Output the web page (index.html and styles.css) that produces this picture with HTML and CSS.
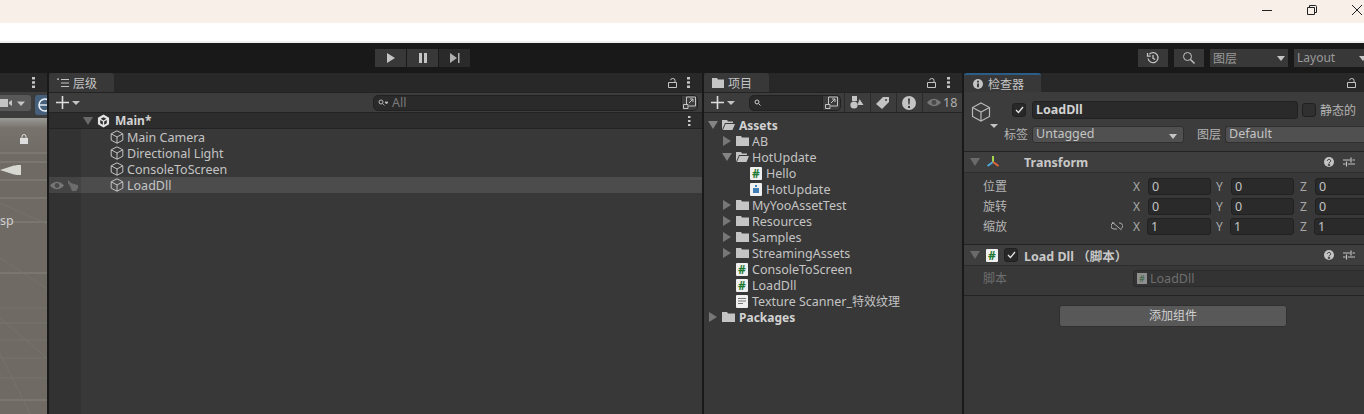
FILE: index.html
```html
<!DOCTYPE html>
<html lang="zh">
<head>
    <meta charset="UTF-8">
    <title>Unity</title>
    <link rel="stylesheet" href="styles.css">
</head>
<body>
    <div class="titlebar">
        <svg class="win-icon" width="12" height="12" viewBox="0 0 12 12"><path d="M1 6.500h10" stroke="#222" fill="none"/></svg>
        <svg class="win-icon" width="12" height="12" viewBox="0 0 12 12"><path d="M1.500 3.500h7v7h-7zM3.500 3.500v-2h6a1 1 0 0 1 1 1v6h-2" stroke="#222" fill="none"/></svg>
        <svg class="win-icon" width="12" height="12" viewBox="0 0 12 12"><path d="M1 1l10 10M11 1L1 11" stroke="#222" fill="none"/></svg>
    </div>
    <div class="menubar"></div>

    <div class="toolbar">
        <div class="play-group">
            <div class="play-btn first"><svg width="10" height="10" viewBox="0 0 10 10"><path d="M1 0l8 5-8 5z" fill="#c4c4c4"/></svg></div>
            <div class="play-btn"><svg width="10" height="10" viewBox="0 0 10 10"><path d="M1 0h3v10H1zM6 0h3v10H6z" fill="#c4c4c4"/></svg></div>
            <div class="play-btn last"><svg width="10" height="10" viewBox="0 0 10 10"><path d="M0 0l7 5-7 5zM8 0h1.500v10H8z" fill="#b0b0b0"/></svg></div>
        </div>
        <div class="tool-right">
            <div class="tool-btn"><svg width="14" height="14" viewBox="0 0 14 14"><path d="M3.400 3.200a5 5 0 1 1-1.300 4.300M1.500 2v3.200h3.200M7 4v3.300l2.200 1.200" stroke="#c4c4c4" stroke-width="1.300" fill="none"/></svg></div>
            <div class="tool-btn"><svg width="14" height="14" viewBox="0 0 14 14"><circle cx="5.500" cy="5.500" r="4" stroke="#c4c4c4" fill="none"/><path d="M8.500 8.500l4 4" stroke="#c4c4c4" stroke-width="1.400"/></svg></div>
            <div class="tool-drop layers">图层<span class="caret"></span></div>
            <div class="tool-drop layout">Layout<span class="caret"></span></div>
        </div>
    </div>

    <div class="panels">
        <div class="panel scene">
            <div class="tabbar"><span class="spacer"></span><svg class="dots" width="3" height="11" viewBox="0 0 3 11"><path d="M0 0h3v2.400H0zM0 4.300h3v2.400H0zM0 8.600h3V11H0z" fill="#c4c4c4"/></svg></div>
            <div class="scene-tools">
                <div class="cam-btn"><svg width="26" height="10" viewBox="0 0 26 10"><path d="M0 1h8v8H0zM9 4l3-2v6l-3-2z" fill="#c4c4c4"/><path d="M17 3.500h8l-4 4.500z" fill="#c4c4c4"/></svg></div>
                <div class="gizmo-btn"><svg width="12" height="14" viewBox="0 0 12 14"><circle cx="10" cy="7" r="6" stroke="#eaf2fa" stroke-width="1.600" fill="none"/><path d="M4 7h8" stroke="#eaf2fa" stroke-width="1.400"/></svg></div>
            </div>
            <div class="scene-view">
                <svg class="scene-grid" width="47" height="296" viewBox="0 0 47 296">
                    <path d="M0 35h47M0 44h47M0 62h47M0 80h47M0 104h47M0 155h47M0 282h47" stroke="#87827c" fill="none"/>
                    <path d="M0 85l47 21M0 140l47 31M0 190h47M0 205h47M0 222h47M0 240h47M0 260h47M0 200l47 40M0 235l30 61" stroke="#77726c" fill="none"/>
                </svg>
                <svg class="scene-lock" width="8" height="10" viewBox="0 0 8 10"><path d="M2 4V2.500a2 2 0 0 1 4 0V4" stroke="#ddd" fill="none"/><path d="M0 4h8v6H0z" fill="#ddd"/></svg>
                <svg class="scene-cone" width="22" height="14" viewBox="0 0 22 14"><path d="M0 7L14 2.500q2 0 3-.5h4v10h-4q-1-.5-3-.5z" fill="#d8d8d2"/></svg>
                <span class="scene-label">sp</span>
            </div>
        </div>

        <div class="panel hierarchy">
            <div class="tabbar">
                <div class="tab"><svg class="tab-icon" width="12" height="10" viewBox="0 0 12 10"><path d="M0 1h2M4 1.500h8M4 5h8M4 8.500h8M1 1v1" stroke="#c4c4c4" fill="none"/></svg>层级</div>
                <span class="spacer"></span>
                <svg class="lock" width="9" height="10" viewBox="0 0 9 10"><path d="M.500 4.500h8v5h-8zM7 4.500V2.200a2.200 1.700 0 0 0-4.400 0" stroke="#c4c4c4" fill="none"/></svg>
                <svg class="dots" width="3" height="11" viewBox="0 0 3 11"><path d="M0 0h3v2.400H0zM0 4.300h3v2.400H0zM0 8.600h3V11H0z" fill="#c4c4c4"/></svg>
            </div>
            <div class="panel-tools">
                <svg class="plus" width="13" height="13" viewBox="0 0 13 13"><path d="M6.500 0v13M0 6.500h13" stroke="#ddd" stroke-width="1.600"/></svg>
                <span class="mini-caret"></span>
                <span class="spacer"></span>
                <div class="search wide">
                    <svg width="10" height="8" viewBox="0 0 10 8"><circle cx="3" cy="3" r="2" stroke="#bbb" fill="none"/><path d="M4.500 4.500L6.500 6.500M7 3h3l-1.500 2z" stroke="#bbb" stroke-width=".8" fill="#bbb"/></svg>
                    <span class="search-text">All</span>
                </div>
                <div class="search-end"><svg width="13" height="13" viewBox="0 0 13 13"><path d="M3.500 8V1h9v9H5.500M0.500 8.500h4.500v4h-4.500zM6 7l4-4M7 3h3v3" stroke="#c4c4c4" fill="none"/></svg></div>
            </div>
            <div class="scene-row"><span class="arrow-down muted"></span>
                <svg class="unity-icon" width="13" height="14" viewBox="0 0 14 14"><path d="M7 0l6 3.500v7L7 14l-6-3.500v-7zM7 3L4 4.700 7 6.500l3-1.800zM3.500 6v3.500L6.300 11V7.500zM10.500 6L7.700 7.500V11l2.800-1.500z" fill="#e4e4e4" fill-rule="evenodd"/></svg>
                <b>Main*</b><span class="spacer"></span>
                <svg class="dots small" width="3" height="10" viewBox="0 0 3 10"><path d="M0 0h2.500v2H0zM0 4h2.500v2H0zM0 8h2.500v2H0z" fill="#c4c4c4"/></svg>
            </div>
            <div class="hier-body">
                <div class="hier-gutter">
                    <div class="gutter-row"></div>
                    <div class="gutter-row"></div>
                    <div class="gutter-row"></div>
                    <div class="gutter-row selected">
                        <svg width="14" height="9" viewBox="0 0 14 9"><path d="M0 4.500Q7-3 14 4.500 7 12 0 4.500z" fill="#777"/><circle cx="7" cy="4.500" r="2.400" fill="#4a4a4a"/></svg>
                        <svg width="12" height="11" viewBox="0 0 12 11"><path d="M1 0l3 3 3 1 4 1v3l-2 3H5L3 6 1 3z" fill="#6c6c6c"/></svg>
                    </div>
                </div>
                <div class="hier-list">
                    <div class="hier-row"><svg class="cube" width="14" height="14" viewBox="0 0 14 14"><path d="M7 .8l5.800 3v6.400L7 13.200 1.200 10.200V3.800zM1.200 3.800L7 7l5.800-3.200M7 7v6.200" stroke="#c4c4c4" fill="none"/></svg>Main Camera</div>
                    <div class="hier-row"><svg class="cube" width="14" height="14" viewBox="0 0 14 14"><path d="M7 .8l5.800 3v6.400L7 13.200 1.200 10.200V3.800zM1.200 3.800L7 7l5.800-3.200M7 7v6.200" stroke="#c4c4c4" fill="none"/></svg>Directional Light</div>
                    <div class="hier-row"><svg class="cube" width="14" height="14" viewBox="0 0 14 14"><path d="M7 .8l5.800 3v6.400L7 13.200 1.200 10.200V3.800zM1.200 3.800L7 7l5.800-3.200M7 7v6.200" stroke="#c4c4c4" fill="none"/></svg>ConsoleToScreen</div>
                    <div class="hier-row selected"><svg class="cube" width="14" height="14" viewBox="0 0 14 14"><path d="M7 .8l5.800 3v6.400L7 13.200 1.200 10.200V3.800zM1.200 3.800L7 7l5.800-3.200M7 7v6.200" stroke="#c4c4c4" fill="none"/></svg>LoadDll</div>
                </div>
            </div>
        </div>

        <div class="panel project">
            <div class="tabbar">
                <div class="tab"><svg class="tab-icon" width="12" height="10" viewBox="0 0 12 10"><path d="M0 0h5l1 1.500h6V10H0z" fill="#c4c4c4"/></svg>项目</div>
                <span class="spacer"></span>
                <svg class="lock" width="9" height="10" viewBox="0 0 9 10"><path d="M.500 4.500h8v5h-8zM7 4.500V2.200a2.200 1.700 0 0 0-4.400 0" stroke="#c4c4c4" fill="none"/></svg>
                <svg class="dots" width="3" height="11" viewBox="0 0 3 11"><path d="M0 0h3v2.400H0zM0 4.300h3v2.400H0zM0 8.600h3V11H0z" fill="#c4c4c4"/></svg>
            </div>
            <div class="panel-tools project-tools">
                <svg class="plus" width="13" height="13" viewBox="0 0 13 13"><path d="M6.500 0v13M0 6.500h13" stroke="#ddd" stroke-width="1.600"/></svg>
                <span class="mini-caret"></span>
                <div class="search narrow"><svg width="7" height="7" viewBox="0 0 7 7"><circle cx="3" cy="3" r="2" stroke="#ccc" fill="none"/><path d="M4.500 4.500L6.500 6.500" stroke="#ccc"/></svg></div>
                <div class="search-end"><svg width="13" height="13" viewBox="0 0 13 13"><path d="M3.500 8V1h9v9H5.500M0.500 8.500h4.500v4h-4.500zM6 7l4-4M7 3h3v3" stroke="#c4c4c4" fill="none"/></svg></div>
                <div class="filter-btn"><svg width="14" height="13" viewBox="0 0 14 13"><circle cx="4" cy="9" r="3.600" fill="#c4c4c4"/><path d="M2 0h5v5H2z" fill="#c4c4c4"/><path d="M9.500 3l4 6h-6z" fill="#c4c4c4"/></svg></div>
                <div class="filter-btn"><svg width="13" height="12" viewBox="0 0 13 12"><path d="M0 7l7-7h6v5l-7 7z" fill="#c4c4c4"/><circle cx="10" cy="3" r="1" fill="#3c3c3c"/></svg></div>
                <div class="filter-btn"><svg width="14" height="14" viewBox="0 0 14 14"><circle cx="7" cy="7" r="7" fill="#c4c4c4"/><path d="M6 2.500h2L7.600 8.500H6.400zM6 10h2v2H6z" fill="#3c3c3c"/></svg></div>
                <div class="hidden-count"><svg width="14" height="9" viewBox="0 0 14 9"><path d="M0 4.500Q7-3 14 4.500 7 12 0 4.500z" fill="#777"/><circle cx="7" cy="4.500" r="2.400" fill="#4a4a4a"/></svg>18</div>
            </div>
            <div class="tree">
                <div class="tree-row bold lv0"><span class="arrow-down"></span><svg class="folder" width="13" height="10" viewBox="0 0 13 10"><path d="M0 0h5l1 1.500h5v1.500H3L0 10z M1 10l2.500-6H13l-2.500 6z" fill="#c4c4c4"/></svg>Assets</div>
                <div class="tree-row lv1"><span class="arrow-right"></span><svg class="folder" width="13" height="10" viewBox="0 0 13 10"><path d="M0 0h5l1 1.500h7V10H0z" fill="#c4c4c4"/></svg>AB</div>
                <div class="tree-row lv1"><span class="arrow-down"></span><svg class="folder" width="13" height="10" viewBox="0 0 13 10"><path d="M0 0h5l1 1.500h5v1.500H3L0 10z M1 10l2.500-6H13l-2.500 6z" fill="#c4c4c4"/></svg>HotUpdate</div>
                <div class="tree-row lv2"><span class="cs-file">#</span>Hello</div>
                <div class="tree-row lv2"><span class="asm-file"><svg width="6" height="8" viewBox="0 0 6 8"><path d="M2 0h2v2H2zM0 3h6v5H0z" fill="#3f7fb5"/></svg></span>HotUpdate</div>
                <div class="tree-row lv1"><span class="arrow-right"></span><svg class="folder" width="13" height="10" viewBox="0 0 13 10"><path d="M0 0h5l1 1.500h7V10H0z" fill="#c4c4c4"/></svg>MyYooAssetTest</div>
                <div class="tree-row lv1"><span class="arrow-right"></span><svg class="folder" width="13" height="10" viewBox="0 0 13 10"><path d="M0 0h5l1 1.500h7V10H0z" fill="#c4c4c4"/></svg>Resources</div>
                <div class="tree-row lv1"><span class="arrow-right"></span><svg class="folder" width="13" height="10" viewBox="0 0 13 10"><path d="M0 0h5l1 1.500h7V10H0z" fill="#c4c4c4"/></svg>Samples</div>
                <div class="tree-row lv1"><span class="arrow-right"></span><svg class="folder" width="13" height="10" viewBox="0 0 13 10"><path d="M0 0h5l1 1.500h7V10H0z" fill="#c4c4c4"/></svg>StreamingAssets</div>
                <div class="tree-row lv1f"><span class="cs-file">#</span>ConsoleToScreen</div>
                <div class="tree-row lv1f"><span class="cs-file">#</span>LoadDll</div>
                <div class="tree-row lv1f"><span class="txt-file"><svg width="8" height="6" viewBox="0 0 8 6"><path d="M0 .5h8M0 3h8M0 5.500h5" stroke="#777"/></svg></span>Texture Scanner_<span class="zh">特效纹理</span></div>
                <div class="tree-row bold lv0"><span class="arrow-right"></span><svg class="folder" width="13" height="10" viewBox="0 0 13 10"><path d="M0 0h5l1 1.500h7V10H0z" fill="#c4c4c4"/></svg>Packages</div>
            </div>
        </div>

        <div class="panel inspector">
            <div class="tabbar">
                <div class="tab insp-tab"><svg class="tab-icon" width="10" height="10" viewBox="0 0 10 10"><circle cx="5" cy="5" r="5" fill="#c4c4c4"/><path d="M4 1.800h2v1.600H4zM4 4.400h2v3.800H4z" fill="#3c3c3c"/></svg>检查器</div>
                <span class="spacer"></span>
                <svg class="lock" width="9" height="10" viewBox="0 0 9 10"><path d="M.500 4.500h8v5h-8zM7 4.500V2.200a2.200 1.700 0 0 0-4.400 0" stroke="#c4c4c4" fill="none"/></svg>
            </div>
            <div class="go-header">
                <div class="go-icon">
                    <svg width="20" height="20" viewBox="0 0 20 20"><path d="M10 1l8.500 4.500v9L10 19l-8.500-4.500v-9zM1.500 5.500L10 10l8.500-4.500M10 10v9" stroke="#b8b8b8" stroke-width="1.200" fill="none"/></svg>
                    <span class="mini-caret go-caret"></span>
                </div>
                <div class="go-rows">
                    <div class="go-row first">
                        <span class="check"><svg width="9" height="8" viewBox="0 0 9 8"><path d="M1 4l2.500 2.500L8 1" stroke="#e6e6e6" stroke-width="1.300" fill="none"/></svg></span>
                        <div class="name-field">LoadDll</div>
                        <span class="check empty"></span>
                        <span class="label-zh">静态的</span>
                    </div>
                    <div class="go-row">
                        <span class="label-zh tag-label">标签</span>
                        <div class="select tag-select">Untagged<span class="caret"></span></div>
                        <span class="label-zh layer-label">图层</span>
                        <div class="select layer-select">Default</div>
                    </div>
                </div>
            </div>
            <div class="comp-head">
                <span class="arrow-down muted"></span>
                <svg class="axis" width="14" height="14" viewBox="0 0 14 14"><path d="M7 1v6" stroke="#a6d64a" stroke-width="2"/><path d="M7 7L1.500 11" stroke="#4aa8d8" stroke-width="2"/><path d="M7 7l5.500 4" stroke="#e0683c" stroke-width="2"/></svg>
                <b class="comp-title transform">Transform</b>
                <span class="spacer"></span>
                <svg class="help" width="10" height="10" viewBox="0 0 10 10"><circle cx="5" cy="5" r="5" fill="#c4c4c4"/><path d="M3.300 3.800a1.700 1.500 0 1 1 2.500 1.400Q5 5.600 5 6.500M4.300 7.400h1.400v1.200H4.300z" stroke="#3c3c3c" fill="none"/></svg>
                <svg class="presets" width="12" height="10" viewBox="0 0 12 10"><path d="M0 3h7M9.500 3H12M0 7h2.500M5 7h7M8 .5v5M3.500 4.500v5" stroke="#c4c4c4" stroke-width="1.200" fill="none"/></svg>
            </div>
            <div class="transform-body">
                <div class="vec-row"><span class="vec-label">位置</span><span class="vec-spacer"></span><span class="axis-l">X</span><div class="num">0</div><span class="axis-l">Y</span><div class="num">0</div><span class="axis-l z">Z</span><div class="num">0</div></div>
                <div class="vec-row"><span class="vec-label">旋转</span><span class="vec-spacer"></span><span class="axis-l">X</span><div class="num">0</div><span class="axis-l">Y</span><div class="num">0</div><span class="axis-l z">Z</span><div class="num">0</div></div>
                <div class="vec-row scale"><span class="vec-label">缩放</span><span class="vec-spacer"></span>
                    <svg class="link" width="12" height="10" viewBox="0 0 12 10"><path d="M3.500 2H3a3 3 0 0 0 0 6h3M8 2h1a3 3 0 0 1 1 5.700M1 1l9.500 8" stroke="#aaa" fill="none"/></svg>
                    <span class="axis-l">X</span><div class="num">1</div><span class="axis-l">Y</span><div class="num">1</div><span class="axis-l z">Z</span><div class="num">1</div></div>
            </div>
            <div class="comp-head script-head">
                <span class="arrow-down muted"></span>
                <span class="cs-file">#</span>
                <span class="check"><svg width="9" height="8" viewBox="0 0 9 8"><path d="M1 4l2.500 2.500L8 1" stroke="#e6e6e6" stroke-width="1.300" fill="none"/></svg></span>
                <b class="comp-title">Load Dll （脚本）</b>
                <span class="spacer"></span>
                <svg class="help" width="10" height="10" viewBox="0 0 10 10"><circle cx="5" cy="5" r="5" fill="#c4c4c4"/><path d="M3.300 3.800a1.700 1.500 0 1 1 2.500 1.400Q5 5.600 5 6.500M4.300 7.400h1.400v1.200H4.300z" stroke="#3c3c3c" fill="none"/></svg>
                <svg class="presets" width="12" height="10" viewBox="0 0 12 10"><path d="M0 3h7M9.500 3H12M0 7h2.500M5 7h7M8 .5v5M3.500 4.500v5" stroke="#c4c4c4" stroke-width="1.200" fill="none"/></svg>
            </div>
            <div class="script-body">
                <span class="vec-label dim">脚本</span>
                <div class="script-field"><span class="script-mini">#</span>LoadDll</div>
            </div>
            <div class="add-row"><div class="add-btn">添加组件</div></div>
        </div>
    </div>
</body>
</html>
```
FILE: styles.css
```css
* {
    box-sizing: border-box;
}

html, body {
    margin: 0;
    height: 100%;
    overflow: hidden;
}

body {
    width: 1364px;
    height: 414px;
    display: flex;
    flex-direction: column;
    background-color: #191919;
    color: #c4c4c4;
    font-family: "Noto Sans", "Noto Sans CJK SC", sans-serif;
    font-size: 12.5px;
}

svg {
    flex: none;
    display: block;
}

.spacer {
    flex: 1;
}

.zh {
    font-size: 12px;
}

.titlebar {
    height: 23px;
    background-color: #f8f0e8;
    display: flex;
    justify-content: flex-end;
    align-items: center;
    gap: 33px;
    padding: 0 1px 3px 0;
}

.menubar {
    height: 20px;
    background-color: #fff;
    border-bottom: 2px solid #f0f0f0;
}

/* top toolbar */
.toolbar {
    height: 30px;
    background-color: #191919;
    display: flex;
    align-items: center;
    padding-bottom: 1px;
    position: relative;
}

.play-group {
    display: flex;
    gap: 1px;
    margin-left: 375px;
}

.play-btn {
    width: 31px;
    height: 18px;
    background-color: #383838;
    display: flex;
    align-items: center;
    justify-content: center;
}

.play-btn.last {
    background-color: #2a2a2a;
}

.tool-right {
    margin-left: auto;
    display: flex;
    gap: 6px;
    margin-right: -9px;
}

.tool-btn {
    width: 30px;
    height: 18px;
    background-color: #383838;
    display: flex;
    align-items: center;
    justify-content: center;
}

.tool-drop {
    height: 18px;
    background-color: #383838;
    display: flex;
    align-items: center;
    padding-left: 3px;
    position: relative;
    color: #9a9a9a;
    font-size: 12px;
}

.layers {
    width: 78px;
}

.layout {
    width: 79px;
}

.caret {
    position: absolute;
    right: 6px;
    top: 7px;
    border-left: 4px solid transparent;
    border-right: 4px solid transparent;
    border-top: 5px solid #c4c4c4;
}

.layers .caret {
    right: 3px;
}

/* panels */
.panels {
    flex: 1;
    display: flex;
    min-height: 0;
    gap: 2px;
}

.panel {
    background-color: #383838;
    display: flex;
    flex-direction: column;
    min-width: 0;
}

.scene {
    width: 47px;
}

.hierarchy {
    width: 653px;
}

.project {
    width: 258px;
}

.inspector {
    flex: 1;
    overflow: hidden;
}

.tabbar {
    height: 19px;
    background-color: #282828;
    display: flex;
    align-items: center;
    flex: none;
}

.tab {
    width: 65px;
    height: 19px;
    background-color: #383838;
    border-radius: 3px 3px 0 0;
    display: flex;
    align-items: center;
    padding-left: 8px;
    gap: 4px;
    font-size: 12px;
}

.insp-tab {
    width: 77px;
    border-top: 2px solid #2c5d87;
    padding-left: 9px;
    gap: 5px;
}

.lock {
    margin-right: 10px;
    margin-top: 1px;
}

.project .lock {
    margin-right: 11px;
}

.inspector .lock {
    margin-right: 8px;
}

.dots {
    margin-right: 12px;
}

.panel-tools {
    height: 21px;
    flex: none;
    background-color: #3c3c3c;
    border-bottom: 1px solid #232323;
    border-top: 1px solid #232323;
    display: flex;
    align-items: center;
    padding-left: 7px;
}

.plus {
    margin-right: 3px;
}

.mini-caret {
    width: 0;
    height: 0;
    border-left: 4px solid transparent;
    border-right: 4px solid transparent;
    border-top: 4px solid #c4c4c4;
}

.search {
    height: 16px;
    background-color: #2a2a2a;
    border: 1px solid #212121;
    border-radius: 5px 0 0 5px;
    display: flex;
    align-items: center;
    padding-left: 4px;
}

.search.wide {
    width: 309px;
}

.search.narrow {
    width: 74px;
    margin-left: 14px;
}

.search-text {
    color: #7a7a7a;
    font-size: 12.5px;
    margin-left: 4px;
}

.search-end {
    width: 16px;
    height: 16px;
    background-color: #3c3c3c;
    border: 1px solid #212121;
    border-left: none;
    border-radius: 0 5px 5px 0;
    display: flex;
    align-items: center;
    justify-content: center;
    margin-right: 4px;
}

/* scene */
.scene-tools {
    height: 26px;
    flex: none;
    background-color: #3c3c3c;
    display: flex;
    align-items: flex-start;
    padding-top: 3px;
    gap: 4px;
}

.cam-btn {
    width: 31px;
    height: 16px;
    background-color: #585858;
    border-radius: 0 3px 3px 0;
    display: flex;
    align-items: center;
    justify-content: flex-end;
    padding-right: 5px;
}

.gizmo-btn {
    flex: 1;
    height: 20px;
    background-color: #46607c;
    border-radius: 3px 0 0 3px;
    display: flex;
    align-items: center;
}

.scene-view {
    flex: 1;
    position: relative;
    overflow: hidden;
    background: linear-gradient(to bottom, #9a9a96 0, #77726c 10px, #6f6a64 40px);
}

.scene-grid {
    position: absolute;
    left: 0;
    top: 0;
}

.scene-lock {
    position: absolute;
    left: 20px;
    top: 16px;
}

.scene-cone {
    position: absolute;
    left: 0;
    top: 45px;
}

.scene-label {
    position: absolute;
    left: 0;
    top: 94px;
    color: #d0d0d0;
    font-size: 12.5px;
}

/* hierarchy */
.scene-row {
    height: 16px;
    flex: none;
    background-color: #2d2d2d;
    border-bottom: 1px solid #232323;
    display: flex;
    align-items: center;
    padding-left: 34px;
    font-size: 12px;
    color: #d2d2d2;
}

.arrow-down {
    flex: none;
    width: 0;
    height: 0;
    border-left: 5px solid transparent;
    border-right: 5px solid transparent;
    border-top: 8px solid #848484;
}

.arrow-down.muted {
    border-top-color: #6a6a6a;
}

.arrow-right {
    flex: none;
    width: 0;
    height: 0;
    border-top: 5px solid transparent;
    border-bottom: 5px solid transparent;
    border-left: 8px solid #777;
    margin: 0 1px;
}

.unity-icon {
    margin: 0 5px 0 4px;
}

.dots.small {
    margin-right: 11px;
}

.hier-body {
    flex: 1;
    display: flex;
}

.hier-gutter {
    width: 32px;
    background-color: #323232;
}

.gutter-row {
    height: 16px;
    display: flex;
    align-items: center;
    padding-left: 1px;
    gap: 3px;
}

.gutter-row.selected {
    background-color: #444;
}

.hier-list {
    flex: 1;
}

.hier-row {
    height: 16px;
    display: flex;
    align-items: center;
    padding-left: 29px;
    gap: 3px;
}

.hier-row.selected {
    background-color: #4c4c4c;
}

/* project */
.project-tools .search-end {
    width: 18px;
    margin-right: 3px;
}

.filter-btn {
    width: 26px;
    height: 19px;
    border-left: 1px solid #2a2a2a;
    padding-right: 2px;
    display: flex;
    align-items: center;
    justify-content: center;
}

.hidden-count {
    flex: 1;
    height: 19px;
    border-left: 1px solid #2a2a2a;
    display: flex;
    align-items: center;
    padding-left: 4px;
    gap: 2px;
    color: #b0b0b0;
}

.tree {
    padding-top: 4px;
}

.tree-row {
    height: 16px;
    display: flex;
    align-items: center;
}

.tree-row.bold {
    font-size: 12px;
    font-weight: 700;
    color: #d2d2d2;
}

.tree-row .folder {
    margin-right: 3px;
}

.lv0 {
    padding-left: 4px;
}

.lv0 .folder {
    margin-left: 4px;
    margin-right: 4px;
}

.lv1 {
    padding-left: 18px;
}

.lv1 .folder {
    margin-left: 4px;
}

.lv1f {
    padding-left: 32px;
}

.lv2 {
    padding-left: 46px;
}

.cs-file, .asm-file, .txt-file {
    flex: none;
    width: 12px;
    height: 13px;
    margin-right: 4px;
    background-color: #f0f0f0;
    color: #1f7a34;
    font-size: 12px;
    font-weight: 700;
    line-height: 13px;
    text-align: center;
    border-radius: 1px;
    display: flex;
    align-items: center;
    justify-content: center;
}

/* inspector */
.go-header {
    height: 60px;
    flex: none;
    background-color: #3c3c3c;
    border-bottom: 1px solid #232323;
    display: flex;
    padding: 9px 0 0 7px;
}

.go-icon {
    width: 33px;
    flex: none;
    position: relative;
}

.go-icon svg {
    margin-top: 1px;
}

.go-caret {
    position: absolute;
    left: 19px;
    top: 23px;
}

.go-rows {
    flex: 1;
    display: flex;
    flex-direction: column;
    gap: 6px;
    min-width: 0;
}

.go-row {
    display: flex;
    align-items: center;
    height: 18px;
}

.go-row.first {
    padding-left: 8px;
}

.check {
    flex: none;
    width: 14px;
    height: 14px;
    background-color: #282828;
    border: 1px solid #202020;
    border-radius: 3px;
    display: flex;
    align-items: center;
    justify-content: center;
}

.check.empty {
    background-color: #303030;
    margin-left: 4px;
}

.name-field {
    width: 266px;
    height: 18px;
    flex: none;
    margin-left: 6px;
    background-color: #2a2a2a;
    border: 1px solid #212121;
    border-radius: 3px;
    padding-left: 3px;
    font-weight: 700;
    line-height: 15px;
    color: #d2d2d2;
}

.label-zh {
    flex: none;
    margin-left: 4px;
    font-size: 12px;
    color: #b4b4b4;
    white-space: nowrap;
}

.tag-label {
    margin-left: 0;
}

.select {
    height: 17px;
    background-color: #505050;
    border: 1px solid #303030;
    border-radius: 3px;
    padding-left: 3px;
    line-height: 14px;
    position: relative;
}

.tag-select {
    width: 152px;
    flex: none;
    margin-left: 4px;
}

.layer-label {
    margin-left: 13px;
}

.layer-select {
    flex: 1;
    margin-left: 4px;
    border-right: none;
    border-radius: 3px 0 0 3px;
}

.comp-head {
    height: 21px;
    flex: none;
    background-color: #3e3e3e;
    border-bottom: 1px solid #2d2d2d;
    display: flex;
    align-items: center;
    padding-left: 6px;
}

.axis {
    margin-left: 6px;
}

.comp-title {
    font-size: 12.5px;
    color: #c8c8c8;
}

.comp-title.transform {
    margin-left: 24px;
}

.help {
    margin-right: 9px;
}

.presets {
    margin-right: 9px;
}

.transform-body {
    height: 72px;
    flex: none;
    padding-top: 3px;
    border-bottom: 1px solid #232323;
}

.vec-row {
    height: 20px;
    display: flex;
    align-items: center;
    padding-left: 19px;
}

.vec-label {
    width: 100px;
    flex: none;
    font-size: 12px;
    color: #b4b4b4;
}

.vec-label.dim {
    color: #6e6e6e;
}

.vec-spacer {
    width: 50px;
    flex: none;
}

.scale .vec-spacer {
    width: 28px;
}

.link {
    margin-right: 10px;
}

.axis-l {
    flex: none;
    width: 15px;
    font-size: 12px;
    color: #a8a8a8;
}

.axis-l.z {
    margin-left: 1px;
}

.num {
    flex: none;
    width: 63px;
    height: 17px;
    margin-right: 5px;
    background-color: #2a2a2a;
    border: 1px solid #212121;
    border-radius: 3px;
    padding-left: 3px;
    line-height: 15px;
}

.scale .num {
    width: 64px;
    margin-left: -1px;
}

.script-head .cs-file {
    margin: 0 0 0 6px;
}

.script-head .check {
    margin-left: 6px;
    margin-right: 6px;
}

.script-body {
    height: 30px;
    flex: none;
    display: flex;
    align-items: center;
    padding: 0 0 5px 19px;
    border-bottom: 1px solid #232323;
}

.script-field {
    flex: none;
    width: 240px;
    height: 17px;
    margin-left: 50px;
    background-color: #333;
    border: 1px solid #2a2a2a;
    border-radius: 3px;
    padding-left: 3px;
    display: flex;
    align-items: center;
    gap: 3px;
    color: #6e6e6e;
}

.script-mini {
    width: 10px;
    height: 11px;
    background-color: #8f8f8f;
    color: #2f5f3a;
    font-size: 9px;
    line-height: 11px;
    text-align: center;
}

.add-row {
    display: flex;
    padding: 9px 0 0 95px;
}

.add-btn {
    width: 228px;
    height: 22px;
    background-color: #585858;
    border: 1px solid #303030;
    border-radius: 3px;
    text-align: center;
    line-height: 20px;
    font-size: 12px;
    color: #d0d0d0;
}
```
